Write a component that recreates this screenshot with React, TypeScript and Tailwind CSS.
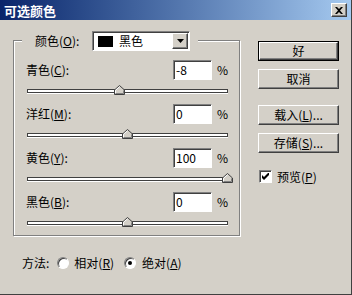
import React from 'react';

// 可选颜色对话框 (Windows 经典主题)
const FONT = { fontFamily: '"Noto Sans CJK SC", "Liberation Sans", sans-serif' };

const raised =
  'border border-t-white border-l-white border-r-[#404040] border-b-[#404040] shadow-[inset_-1px_-1px_0_#808080] bg-[#d4d0c8]';
const sunken =
  'border border-t-[#808080] border-l-[#808080] border-r-white border-b-white shadow-[inset_1px_1px_0_#404040] bg-white';

const Thumb = () => (
  <svg width="11" height="10" viewBox="0 0 11 10" className="block">
    <path d="M0.5 9.5 V5 L5.5 0.5 L10.5 5 V9.5 Z" fill="#d4d0c8" stroke="#404040" />
    <path d="M1.5 8.5 V5.3 L5.5 1.8" fill="none" stroke="#ffffff" />
    <path d="M1.5 8.5 H9.5 V5.4" fill="none" stroke="#808080" />
  </svg>
);

const Slider = ({ value }: { value: number }) => {
  const left = ((value + 100) / 200) * 200;
  return (
    <div className="relative h-[10px] ml-[13px] w-[201px] mt-[5px]">
      <div className="absolute left-0 right-0 top-[4px] h-[4px] border border-[#404040] border-b-[#404040] bg-white shadow-[0_1px_0_#fff]" />
      <div className="absolute top-0" style={{ left: left - 5 }}>
        <Thumb />
      </div>
    </div>
  );
};

const Row = ({ name, k, value, num }: { name: string; k: string; value: string; num: number }) => (
  <div className="mt-[9px] first:mt-[10px]">
    <div className="flex items-center h-[20px] pl-[12px]">
      <span className="w-[147px]">
        {name}(<span className="underline">{k}</span>):
      </span>
      <div className={`w-[39px] h-[20px] ${sunken} flex items-center pl-[2px]`}>{value}</div>
      <span className="ml-[5px]">%</span>
    </div>
    <Slider value={num} />
  </div>
);

const Btn = ({ children, def, cls }: { children: React.ReactNode; def?: boolean; cls?: string }) => (
  <div className={`${cls ?? ''} w-[81px] h-[20px] ${def ? 'border border-black' : ''}`}>
    <div className={`w-full h-full ${raised} flex items-center justify-center`}>{children}</div>
  </div>
);

const Radio = ({ on }: { on?: boolean }) => (
  <div className="w-[12px] h-[12px] rounded-full bg-white border border-t-[#808080] border-l-[#808080] border-r-white border-b-white shadow-[inset_1px_1px_0_#404040] flex items-center justify-center">
    {on && <div className="w-[4px] h-[4px] rounded-full bg-black" />}
  </div>
);

export default function App() {
  return (
    <div
      className="w-[352px] h-[295px] bg-[#d4d0c8] flex flex-col overflow-hidden text-[12px] leading-none text-black border-r border-b border-[#404040]"
      style={FONT}
    >
      {/* 标题栏 */}
      <div className="h-[20px] shrink-0 flex items-center bg-gradient-to-r from-[#0a246a] to-[#a6caf0] pl-[4px] pr-[4px]">
        <span className="text-white font-bold text-[13px]">可选颜色</span>
        <div className={`ml-auto w-[16px] h-[14px] ${raised} flex items-center justify-center`}>
          <svg width="8" height="7" viewBox="0 0 8 7">
            <path d="M0 0 L2 0 L4 2 L6 0 L8 0 L5 3.5 L8 7 L6 7 L4 5 L2 7 L0 7 L3 3.5 Z" fill="#000" />
          </svg>
        </div>
      </div>

      <div className="flex flex-1">
        {/* 左栏 */}
        <div className="pl-[13px] pt-[20px]">
          <div className="w-[227px] h-[196px] border border-[#808080] shadow-[inset_1px_1px_0_#fff,1px_1px_0_#fff]">
            <div className="-mt-[10px] ml-[8px] w-fit bg-[#d4d0c8] flex items-center pl-[13px] pr-[8px]">
              <span className="w-[57px]">
                颜色(<span className="underline">O</span>):
              </span>
              <div className={`w-[98px] h-[20px] ${sunken} flex items-center`}>
                <div className="ml-[5px] w-[15px] h-[11px] bg-black" />
                <span className="ml-[6px]">黑色</span>
                <div className={`ml-auto mr-[1px] w-[16px] h-[16px] ${raised} flex items-center justify-center`}>
                  <svg width="7" height="4" viewBox="0 0 7 4">
                    <path d="M0 0 H7 L3.5 4 Z" fill="#000" />
                  </svg>
                </div>
              </div>
            </div>
            <Row name="青色" k="C" value="-8" num={-8} />
            <Row name="洋红" k="M" value="0" num={0} />
            <Row name="黄色" k="Y" value="100" num={100} />
            <Row name="黑色" k="B" value="0" num={0} />
          </div>

          <div className="flex items-center h-[16px] mt-[19px] pl-[9px]">
            <span>方法:</span>
            <div className="ml-[8px]">
              <Radio />
            </div>
            <span className="ml-[5px]">
              相对(<span className="underline">R</span>)
            </span>
            <div className="ml-[10px]">
              <Radio on />
            </div>
            <span className="ml-[6px]">
              绝对(<span className="underline">A</span>)
            </span>
          </div>
        </div>

        {/* 右栏 */}
        <div className="ml-[18px] pt-[21px] flex flex-col">
          <Btn def>好</Btn>
          <Btn cls="mt-[8px]">取消</Btn>
          <Btn cls="mt-[16px]">
            载入(<span className="underline">L</span>)...
          </Btn>
          <Btn cls="mt-[8px]">
            存储(<span className="underline">S</span>)...
          </Btn>
          <div className="flex items-center mt-[17px] ml-[1px]">
            <div className={`w-[13px] h-[13px] ${sunken} flex items-center justify-center`}>
              <svg width="7" height="7" viewBox="0 0 7 7">
                <path d="M0 2 L0 5 L2 7 L7 2 L7 -1 L2 4 Z" fill="#000" />
              </svg>
            </div>
            <span className="ml-[5px]">
              预览(<span className="underline">P</span>)
            </span>
          </div>
        </div>
      </div>
    </div>
  );
}
